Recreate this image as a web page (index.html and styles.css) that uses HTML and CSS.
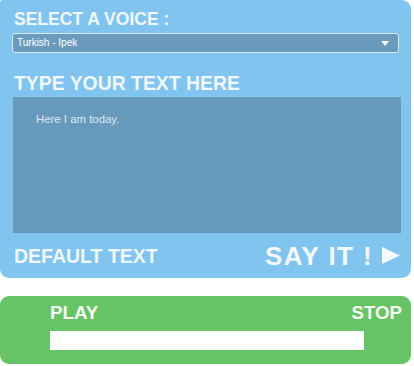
FILE: index.html
```html
<!DOCTYPE html>
<html>
<head>
<meta charset="utf-8">
<link rel="stylesheet" href="styles.css">
</head>
<body>
<div class="app">
  <section class="voice-panel">
    <h2 class="label label-select">SELECT A VOICE :</h2>
    <div class="select">
      <span class="select-text">Turkish - Ipek</span>
      <svg class="select-arrow" width="8" height="5" viewBox="0 0 8 5"><polygon points="0,0 8,0 4,5" fill="#ffffff"/></svg>
    </div>
    <h2 class="label label-type">TYPE YOUR TEXT HERE</h2>
    <div class="textbox">Here I am today.</div>
    <div class="actions">
      <span class="default-text">DEFAULT TEXT</span>
      <span class="say-it">SAY IT !
        <svg class="say-arrow" width="18" height="17" viewBox="0 0 18 17"><polygon points="0,0 18,8.5 0,17" fill="#f4f9fd"/></svg>
      </span>
    </div>
  </section>
  <section class="player">
    <div class="player-row">
      <span class="player-btn">PLAY</span>
      <span class="player-btn">STOP</span>
    </div>
    <div class="progress"></div>
  </section>
</div>
</body>
</html>
```
FILE: styles.css
```css
html, body {
  margin: 0;
  padding: 0;
  background: #ffffff;
}
body {
  font-family: "Liberation Sans", Arial, sans-serif;
}
.app {
  width: 411px;
  display: flex;
  flex-direction: column;
  gap: 18px;
}
.voice-panel {
  background: #80c4ef;
  border-radius: 3px 9px 9px 9px;
  padding: 9px 10px 0 12px;
  height: 278px;
  box-sizing: border-box;
  display: flex;
  flex-direction: column;
}
.label {
  margin: 0;
  color: #f1f8fd;
  font-weight: bold;
}
.label-select {
  font-size: 17.5px;
  line-height: 20px;
  margin-left: 2px;
}
.select {
  margin-top: 4px;
  height: 20px;
  box-sizing: border-box;
  border: 1px solid #d6ebf8;
  border-radius: 3px;
  background: #6a9bbd;
  display: flex;
  align-items: center;
  justify-content: space-between;
  padding: 0 9px 0 4px;
  width: 387px;
}
.select-text {
  color: #ffffff;
  font-size: 10px;
  line-height: 12px;
}
.select-arrow {
  display: block;
}
.label-type {
  font-size: 19.4px;
  line-height: 22px;
  margin-top: 19px;
  margin-left: 2px;
}
.textbox {
  margin-top: 3px;
  margin-left: 1px;
  width: 388px;
  height: 136px;
  box-sizing: border-box;
  background: #6699bb;
  color: #dfeaf2;
  font-size: 11.4px;
  line-height: 14px;
  padding: 15px 0 0 23px;
}
.actions {
  flex: 1;
  display: flex;
  align-items: center;
  justify-content: space-between;
  padding: 0 1px 0 2px;
}
.default-text {
  color: #f1f8fd;
  font-weight: bold;
  font-size: 19.5px;
  line-height: 22px;
}
.say-it {
  display: flex;
  align-items: center;
  gap: 9px;
  color: #f4f9fd;
  font-weight: bold;
  font-size: 26px;
  letter-spacing: 1.4px;
  line-height: 28px;
}
.say-arrow {
  display: block;
}
.player {
  background: #66c466;
  border-radius: 9px;
  height: 68px;
  box-sizing: border-box;
  padding: 6px 9px 0 50px;
  display: flex;
  flex-direction: column;
}
.player-row {
  display: flex;
  justify-content: space-between;
}
.player-btn {
  color: #f3fbf3;
  font-weight: bold;
  font-size: 18.7px;
  line-height: 22px;
}
.progress {
  margin-top: 7px;
  width: 314px;
  height: 19px;
  background: #ffffff;
}
```
